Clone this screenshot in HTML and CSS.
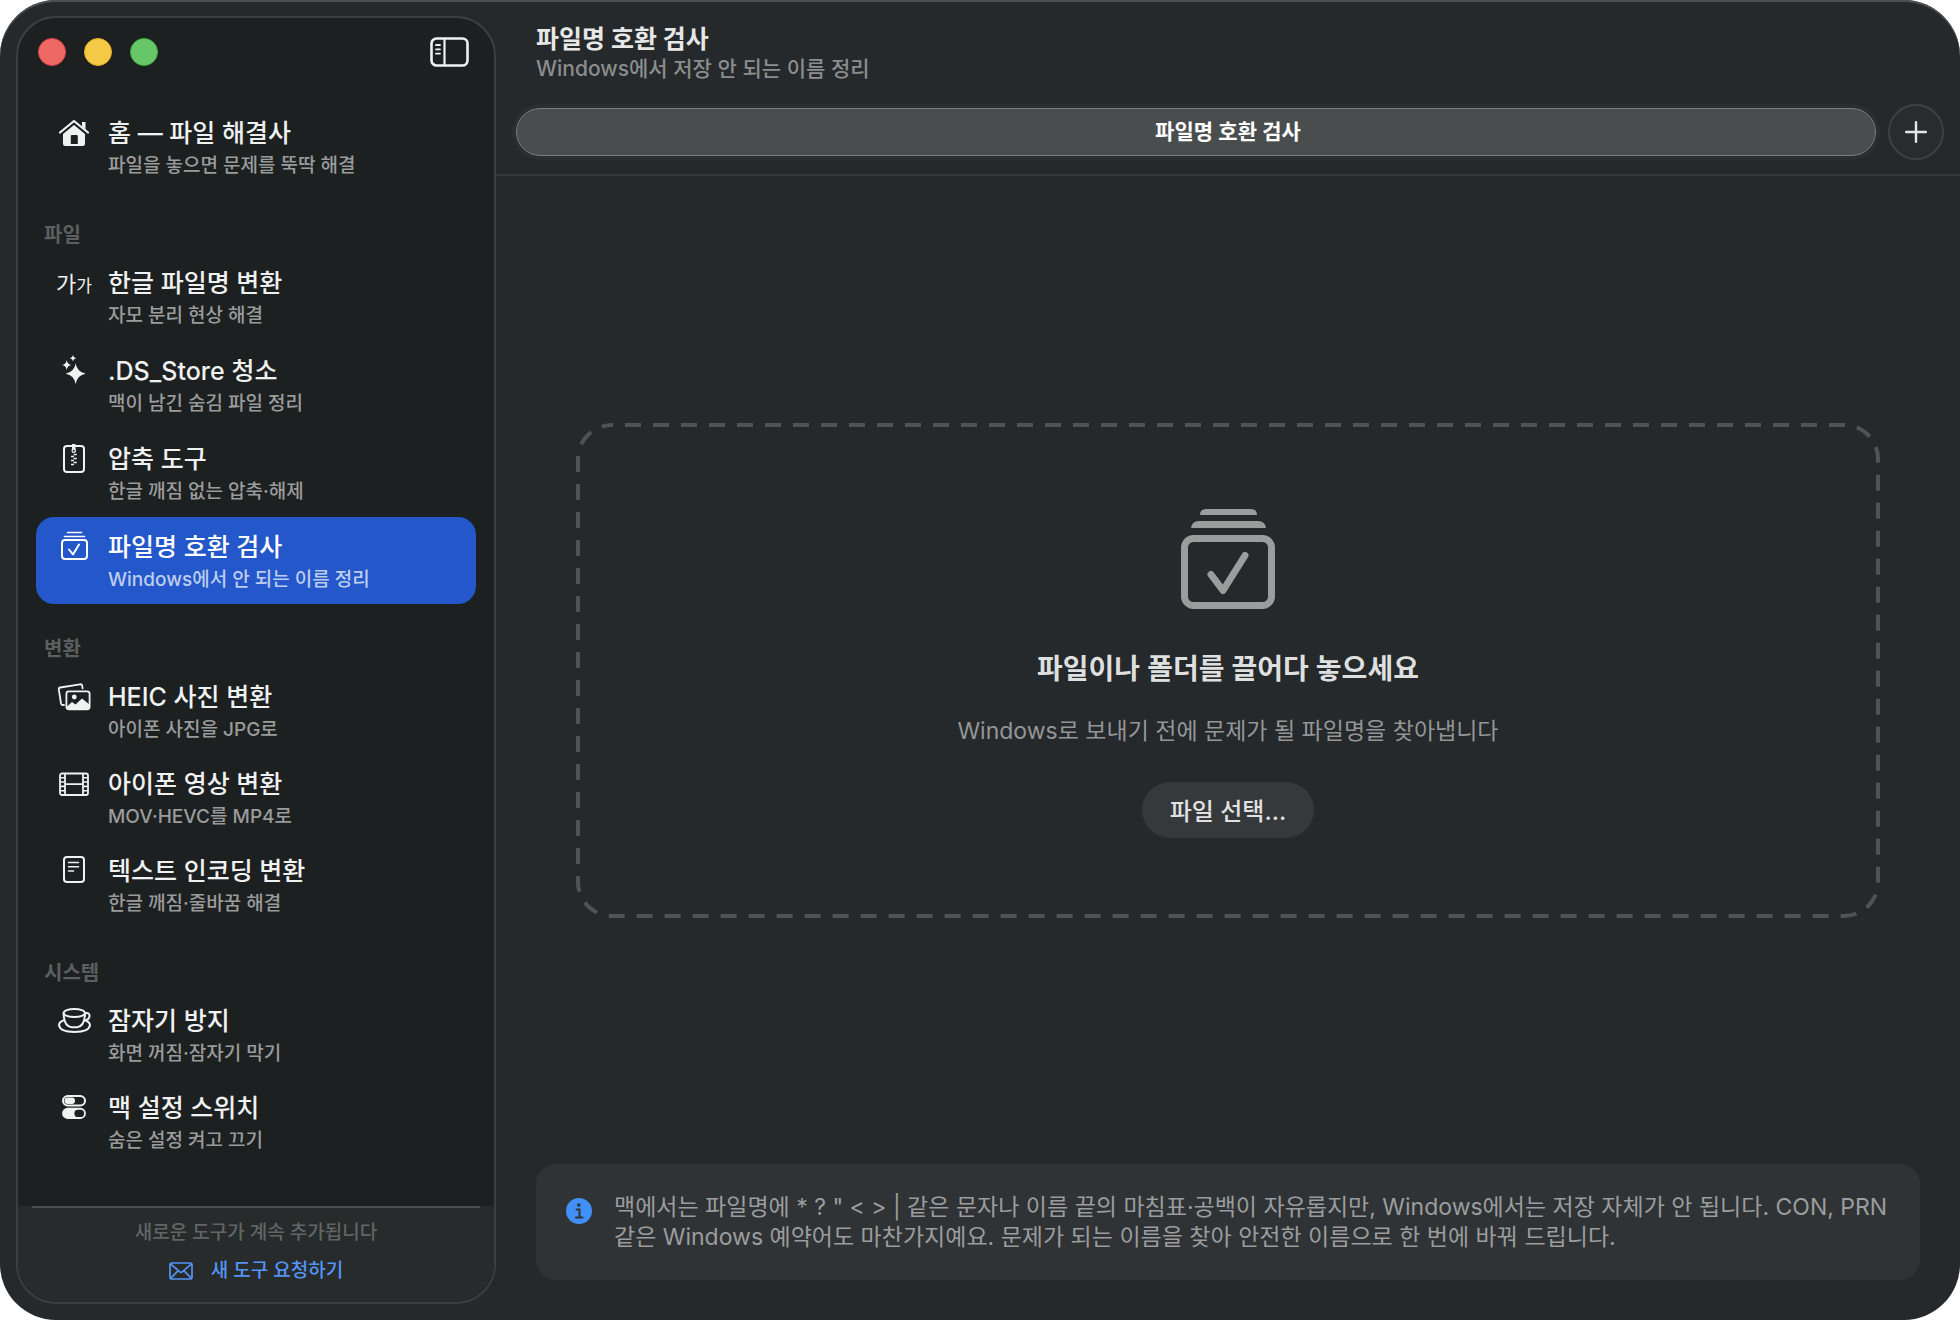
FILE: index.html
```html
<!DOCTYPE html>
<html lang="ko">

<head>
    <meta charset="utf-8">
    <title>파일명 호환 검사</title>
    <link rel="stylesheet" href="styles.css">
</head>

<body>

    <div class="window">
        <aside class="sidebar">
            <div class="titlebar">
                <div class="lights">
                    <button class="light close" aria-label="닫기"></button>
                    <button class="light minimize" aria-label="최소화"></button>
                    <button class="light zoom" aria-label="확대"></button>
                </div>
                <button class="toggle" aria-label="사이드바">
                    <svg width="40" height="32" viewBox="0 0 40 32" fill="none" stroke="currentColor" stroke-width="2.6">
                        <rect x="1.5" y="2.5" width="36" height="27" rx="5" />
                        <path d="M14.5 3v26" stroke-width="2.2" />
                        <path d="M6 9h4M6 13.300h4M6 17.600h4" stroke-width="1.800" stroke-linecap="round" />
                    </svg>
                </button>
            </div>

            <nav class="nav">
                <ul class="nav-list">
                    <li>
                        <a class="nav-item" href="#home">
                            <svg class="icon" viewBox="0 0 40 30" fill="none">
                                <path d="M6 14.500 20 3l14 11.500" stroke="currentColor" stroke-width="2.200" stroke-linecap="round" stroke-linejoin="round" />
                                <path d="M28 4h3.500v7.500L28 8.500z" fill="currentColor" />
                                <path d="M9 16 20 7l11 9V25.500q0 2.500-2.500 2.500h-17Q9 28 9 25.500zM16.800 26h7V18q0-1-1-1h-5q-1 0-1 1z" fill="currentColor" fill-rule="evenodd" />
                            </svg>
                            <span class="nav-text"><b>홈 — 파일 해결사</b><small>파일을 놓으면 문제를 뚝딱 해결</small></span>
                        </a>
                    </li>
                </ul>

                <h2>파일</h2>
                <ul class="nav-list spaced">
                    <li>
                        <a class="nav-item" href="#hangul">
                            <span class="icon icon-text">가<i>가</i></span>
                            <span class="nav-text"><b>한글 파일명 변환</b><small>자모 분리 현상 해결</small></span>
                        </a>
                    </li>
                    <li>
                        <a class="nav-item" href="#dsstore">
                            <svg class="icon" viewBox="0 0 40 30" fill="currentColor">
                                <path d="M21.700 7.500Q23 16 31.700 17.700 23 19.200 21.700 28 20.200 19.200 11.700 17.700 20.200 16 21.700 7.500z" />
                                <path d="M12.700 4Q13.400 8.300 17.500 9 13.400 9.700 12.700 14 12 9.700 8 9 12 8.300 12.700 4z" />
                                <path d="M19 -1Q19.400 1.800 22 2.200 19.400 2.600 19 5.200 18.600 2.600 16 2.200 18.600 1.800 19 -1z" />
                            </svg>
                            <span class="nav-text"><b>.DS_Store 청소</b><small>맥이 남긴 숨김 파일 정리</small></span>
                        </a>
                    </li>
                    <li>
                        <a class="nav-item" href="#archive">
                            <svg class="icon" viewBox="0 0 40 30" fill="none" stroke="currentColor" stroke-width="2">
                                <rect x="10" y="2" width="20" height="26" rx="3" />
                                <path d="M18 0h3.500v4l.5 3q0 2-2.300 2t-2.200-2l.5-3z" fill="currentColor" stroke="none" />
                                <path d="M19.700 10.500h3M17 12.500h3M19.700 14.500h3M17 16.500h3M19.700 18.500h3M17 20.500h3" stroke-width="1.600" />
                                <circle cx="19.700" cy="6.700" r="1" fill="#1d2021" stroke="none" />
                            </svg>
                            <span class="nav-text"><b>압축 도구</b><small>한글 깨짐 없는 압축·해제</small></span>
                        </a>
                    </li>
                    <li>
                        <a class="nav-item selected" href="#names" aria-current="page">
                            <svg class="icon" viewBox="0 0 40 30" fill="none" stroke="currentColor" stroke-width="2">
                                <rect x="8" y="8" width="25" height="19" rx="3" />
                                <path d="M10.500 4.500h20M13.500 .5h14" stroke-width="1.600" stroke-linecap="round" />
                                <path d="m15 17.500 4 5 6-10" stroke-linecap="round" stroke-linejoin="round" />
                            </svg>
                            <span class="nav-text"><b>파일명 호환 검사</b><small>Windows에서 안 되는 이름 정리</small></span>
                        </a>
                    </li>
                </ul>

                <h2>변환</h2>
                <ul class="nav-list">
                    <li>
                        <a class="nav-item" href="#heic">
                            <svg class="icon" viewBox="0 0 40 30" fill="none" stroke="currentColor" stroke-width="1.800">
                                <path d="M10 23 8.500 23Q7.200 23 7 21.500L4.800 7.500Q4.600 5.800 6.200 5.500L26 2.300Q27.800 2 28.200 3.700L28.600 6.300" stroke-linecap="round" />
                                <rect x="12.400" y="9.300" width="23.200" height="18" rx="2.500" />
                                <circle cx="20.300" cy="15" r="2.400" fill="currentColor" stroke="none" />
                                <path d="M13 24.500l5-4.500 3.500 2.500 6.500-6 7.500 6V25q0 2-2 2H15q-2 0-2-2z" fill="currentColor" stroke="none" />
                            </svg>
                            <span class="nav-text"><b>HEIC 사진 변환</b><small>아이폰 사진을 JPG로</small></span>
                        </a>
                    </li>
                    <li>
                        <a class="nav-item" href="#video">
                            <svg class="icon" viewBox="0 0 40 30" fill="none" stroke="currentColor" stroke-width="1.800">
                                <rect x="6" y="4.500" width="28" height="21.500" rx="2" />
                                <path d="M11 5v21M29 5v21M11 15.200h18" />
                                <path d="M6 8.800h5M6 13h5M6 17.400h5M6 21.700h5M29 8.800h5M29 13h5M29 17.400h5M29 21.700h5" stroke-width="1.600" />
                            </svg>
                            <span class="nav-text"><b>아이폰 영상 변환</b><small>MOV·HEVC를 MP4로</small></span>
                        </a>
                    </li>
                    <li>
                        <a class="nav-item" href="#encoding">
                            <svg class="icon" viewBox="0 0 40 30" fill="none" stroke="currentColor" stroke-width="2">
                                <rect x="10" y="1" width="20" height="25" rx="3" />
                                <path d="M14.500 6.500h10M14.500 10.800h10M14.500 15h5" stroke-width="1.600" stroke-linecap="round" />
                            </svg>
                            <span class="nav-text"><b>텍스트 인코딩 변환</b><small>한글 깨짐·줄바꿈 해결</small></span>
                        </a>
                    </li>
                </ul>

                <h2>시스템</h2>
                <ul class="nav-list">
                    <li>
                        <a class="nav-item" href="#awake">
                            <svg class="icon" viewBox="0 0 40 30" fill="none" stroke="currentColor" stroke-width="2">
                                <ellipse cx="20.300" cy="7" rx="10.700" ry="4" />
                                <path d="M9.600 7Q9.800 20.500 17.500 21.200h5.600Q30.800 20.500 31 7" />
                                <path d="M31 7.500q4.500-1.500 4.500 2.200 0 4.300-6 5" />
                                <path d="M10.500 14Q5 15.800 5 19.200 6 26 20.500 26T36 19.200q0-3-4.500-4.700" />
                            </svg>
                            <span class="nav-text"><b>잠자기 방지</b><small>화면 꺼짐·잠자기 막기</small></span>
                        </a>
                    </li>
                    <li>
                        <a class="nav-item" href="#switches">
                            <svg class="icon" viewBox="0 0 40 30" fill="none">
                                <rect x="9" y="3" width="22" height="9.500" rx="4.750" stroke="currentColor" stroke-width="2" />
                                <rect x="10.500" y="4.500" width="10.500" height="6.500" rx="3.250" fill="currentColor" />
                                <path d="M13.700 14.800h12.600a5.600 5.600 0 0 1 0 11.200H13.700a5.600 5.600 0 0 1 0-11.200zM24 16.800a3.600 3.600 0 0 0 0 7.200h2.500a3.600 3.600 0 0 0 0-7.200z" fill="currentColor" fill-rule="evenodd" />
                            </svg>
                            <span class="nav-text"><b>맥 설정 스위치</b><small>숨은 설정 켜고 끄기</small></span>
                        </a>
                    </li>
                </ul>
            </nav>

            <footer class="sidebar-footer">
                <p>새로운 도구가 계속 추가됩니다</p>
                <a href="#request">
                    <svg width="24" height="18" viewBox="0 0 24 18" fill="none" stroke="currentColor" stroke-width="1.700">
                        <rect x="1" y="1" width="22" height="16" rx="2" />
                        <path d="m1.500 1.800 9.300 8q1.200 1 2.400 0l9.300-8M1.500 16.300l7.700-7.600M22.500 16.300l-7.700-7.600" />
                    </svg>
                    새 도구 요청하기
                </a>
            </footer>
        </aside>

        <main class="main">
            <header class="header">
                <h1>파일명 호환 검사</h1>
                <p>Windows에서 저장 안 되는 이름 정리</p>
            </header>

            <div class="tabs">
                <div class="track">
                    <button class="tab">파일명 호환 검사</button>
                </div>
                <button class="add" aria-label="새 탭">
                    <svg width="22" height="22" viewBox="0 0 22 22" stroke="currentColor" stroke-width="2.400" stroke-linecap="round">
                        <path d="M11 1.200v19.600M1.200 11h19.600" />
                    </svg>
                </button>
            </div>

            <div class="content">
                <div class="drop-area">
                    <section class="dropzone">
                        <svg class="dashes" aria-hidden="true"><rect class="dash-line" rx="34" /></svg>
                        <svg class="big-icon" width="94" height="100" viewBox="0 0 94 100" fill="none" stroke="currentColor" stroke-width="7">
                            <rect x="3.500" y="29.500" width="87" height="67" rx="9" />
                            <path d="M19 6q0-6 6-6h45q6 0 6 6zM10 19q1-7 8-7h59q7 0 8 7z" fill="currentColor" stroke="none" />
                            <path d="m30 65.500 12 16 22-35" stroke-linecap="round" stroke-linejoin="round" />
                        </svg>
                        <h2>파일이나 폴더를 끌어다 놓으세요</h2>
                        <p>Windows로 보내기 전에 문제가 될 파일명을 찾아냅니다</p>
                        <button class="choose">파일 선택...</button>
                    </section>
                </div>

                <div class="info">
                    <svg class="info-icon" width="26" height="26" viewBox="0 0 26 26">
                        <circle cx="13" cy="13" r="13" fill="#4090f7" />
                        <circle cx="12.800" cy="7" r="1.800" fill="#2f3335" />
                        <path d="M10.500 11.500h3v7.500M10 19.500h6.500" fill="none" stroke="#2f3335" stroke-width="2" stroke-linecap="round" />
                    </svg>
                    <p>맥에서는 파일명에 * ? " &lt; &gt; | 같은 문자나 이름 끝의 마침표·공백이 자유롭지만, Windows에서는 저장 자체가 안 됩니다. CON, PRN 같은 Windows 예약어도 마찬가지예요. 문제가 되는 이름을 찾아 안전한 이름으로 한 번에 바꿔 드립니다.</p>
                </div>
            </div>
        </main>
    </div>

</body>

</html>
```
FILE: styles.css
```css
* {
    box-sizing: border-box;
    margin: 0;
    padding: 0;
}

body {
    background-color: #fff;
    font-family: Inter, "Noto Sans CJK KR", sans-serif;
    color: #f0f1f1;
}

button {
    font-family: inherit;
    border: none;
    background: none;
    color: inherit;
    cursor: pointer;
}

a {
    color: inherit;
    text-decoration: none;
}

ul {
    list-style: none;
}

svg {
    display: block;
}

.window {
    display: flex;
    min-height: 100vh;
    padding: 16px 0 16px 16px;
    background-color: #25292b;
    border-radius: 56px;
    box-shadow: inset 0 2px 0 #4b5052;
}

/* sidebar */

.sidebar {
    display: flex;
    flex-direction: column;
    flex: none;
    width: 480px;
    background-color: #1d2021;
    border: 2px solid #384042;
    border-radius: 40px;
    overflow: hidden;
}

.titlebar {
    display: flex;
    justify-content: space-between;
    align-items: center;
    height: 68px;
    padding: 0 24px 0 20px;
}

.lights {
    display: flex;
    gap: 18px;
}

.light {
    width: 28px;
    height: 28px;
    border-radius: 50%;
}

.close {
    background-color: #ee6866;
    border: 1px solid #e14643;
}

.minimize {
    background-color: #f3c945;
    border: 1px solid #e3b021;
}

.zoom {
    background-color: #68c668;
    border: 1px solid #3fae42;
}

.nav {
    flex: 1;
    padding: 17px 18px 0;
}

.nav-list.spaced {
    display: grid;
    gap: 1px;
}

.nav h2 {
    margin: 31px 0 4px 8px;
    font-size: 20px;
    line-height: 28px;
    font-weight: 600;
    color: #5c5f60;
}

.nav-item {
    display: flex;
    align-items: flex-start;
    gap: 14px;
    padding: 15px 18px 12px;
    border-radius: 18px;
}

.nav-item.selected {
    background-color: #2457ca;
    color: #fff;
}

.icon {
    flex: none;
    width: 40px;
    height: 30px;
    overflow: visible;
}

.icon-text {
    display: flex;
    justify-content: center;
    align-items: baseline;
    font-size: 22px;
    line-height: 32px;
}

.icon-text i {
    font-size: 17px;
    font-style: normal;
}

.nav-text {
    display: flex;
    flex-direction: column;
    gap: 6px;
    white-space: nowrap;
}

.nav-text b {
    font-size: 25px;
    line-height: 30px;
    font-weight: 500;
}

.nav-text small {
    font-size: 19px;
    line-height: 24px;
    font-weight: 500;
    color: #9a9c9c;
}

.nav-item.selected small {
    color: #bdcdef;
}

.sidebar-footer {
    display: flex;
    flex-direction: column;
    align-items: center;
    gap: 14px;
    padding: 15px 14px 19px;
    background-color: #272b2b;
    font-size: 19px;
    line-height: 24px;
    font-weight: 500;
    position: relative;
}

.sidebar-footer::before {
    content: "";
    position: absolute;
    top: 0;
    left: 14px;
    right: 14px;
    height: 2px;
    background-color: #4b4e4e;
}

.sidebar-footer p {
    color: #616565;
}

.sidebar-footer a {
    display: flex;
    align-items: center;
    gap: 18px;
    color: #5594f7;
}

/* main */

.main {
    display: flex;
    flex-direction: column;
    flex: 1;
    min-width: 0;
}

.header {
    padding: 7px 40px 0;
}

.header h1 {
    font-size: 25px;
    line-height: 32px;
    font-weight: 700;
    color: #e6e7e7;
}

.header p {
    font-size: 21px;
    line-height: 28px;
    font-weight: 500;
    color: #8b8d8e;
}

.tabs {
    display: flex;
    gap: 8px;
    padding: 21px 16px 14px;
    border-bottom: 2px solid #36393c;
}

.track {
    flex: 1;
    padding: 4px;
    border-radius: 28px;
    background-color: #2a2e30;
}

.tab {
    display: block;
    width: 100%;
    height: 48px;
    padding: 0 0 0 64px;
    border: 1px solid #767a7b;
    border-radius: 24px;
    background-color: #494d4e;
    font-size: 21px;
    line-height: 46px;
    font-weight: 600;
    color: #fff;
}

.add {
    display: flex;
    justify-content: center;
    align-items: center;
    width: 56px;
    height: 56px;
    border: 2px solid #3a4247;
    border-radius: 50%;
    background-color: #282c2e;
    color: #e6e7e7;
}

.content {
    display: flex;
    flex-direction: column;
    flex: 1;
    padding: 0 40px 24px;
}

.drop-area {
    display: flex;
    flex-direction: column;
    justify-content: center;
    flex: 1;
    padding: 0 40px;
}

.dropzone {
    position: relative;
    display: flex;
    flex-direction: column;
    align-items: center;
    padding: 86px 40px 80px;
}

.dashes {
    position: absolute;
    inset: 0;
    width: 100%;
    height: 100%;
}

.dash-line {
    x: 2px;
    y: 2px;
    width: calc(100% - 4px);
    height: calc(100% - 4px);
    fill: none;
    stroke: #4f5355;
    stroke-width: 4px;
    stroke-dasharray: 16 12;
    stroke-dashoffset: -13px;
}

.big-icon {
    color: #9b9d9d;
}

.dropzone h2 {
    margin-top: 40px;
    font-size: 28px;
    line-height: 40px;
    font-weight: 600;
    color: #dedfdf;
}

.dropzone p {
    margin-top: 26px;
    font-size: 23px;
    line-height: 32px;
    color: #949697;
}

.choose {
    margin-top: 35px;
    height: 56px;
    padding: 0 28px;
    border-radius: 28px;
    background-color: #35393b;
    font-size: 24px;
    font-weight: 500;
    color: #e0e1e1;
}

.info {
    display: flex;
    gap: 22px;
    padding: 28px 30px;
    border-radius: 20px;
    background-color: #2f3335;
}

.info-icon {
    flex: none;
    margin-top: 6px;
}

.info p {
    font-size: 23px;
    line-height: 30px;
    color: #9b9d9e;
}
```
